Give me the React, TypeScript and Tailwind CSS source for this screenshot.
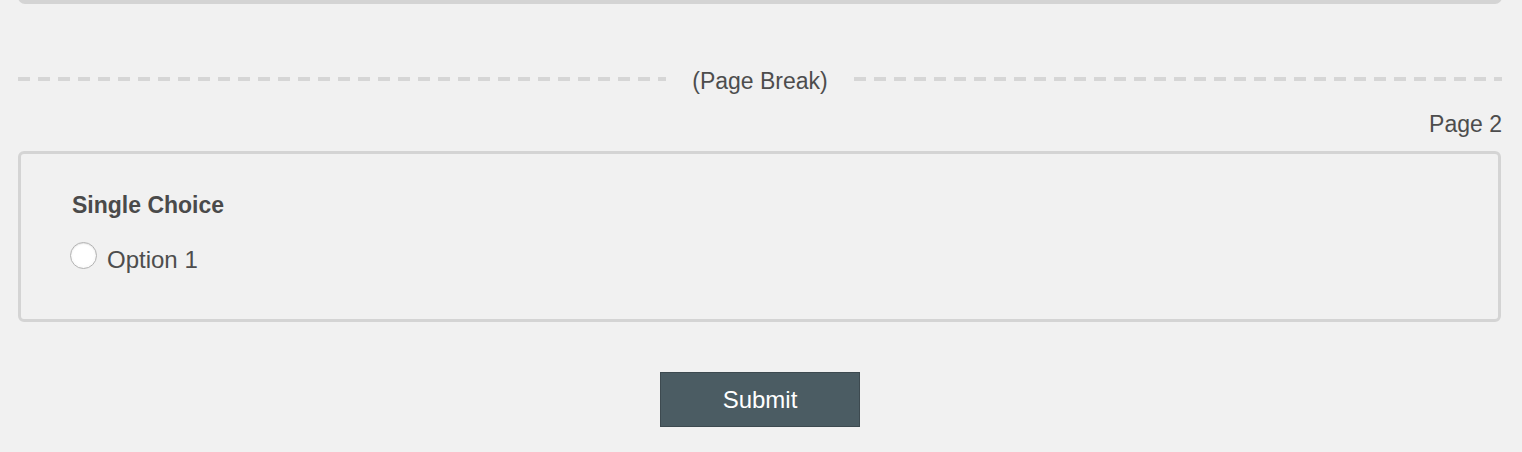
import React from 'react';

const font = { fontFamily: '"Liberation Sans", Arial, Helvetica, sans-serif' };

const DashLine: React.FC = () => (
  <div className="flex-1 h-[4px] bg-[repeating-linear-gradient(to_right,#d6d6d6_0_12px,transparent_12px_20px)]" />
);

const App: React.FC = () => {
  return (
    <div className="min-h-[452px] bg-[#f1f1f1] text-[#4d4d4d] pb-6 overflow-hidden" style={font}>
      {/* end of previous page's card */}
      <div className="ml-[18px] mr-[20px] -mt-[9px] h-[13px] border-x-[3px] border-b-[4px] border-[#d4d4d4] rounded-b-[7px]" />

      {/* page break */}
      <div className="ml-[18px] mr-[20px] mt-[59px] flex items-center">
        <DashLine />
        <span className="px-[26px] pt-[4px] text-[23px] leading-[28px]">(Page Break)</span>
        <DashLine />
      </div>

      <div className="ml-[18px] mr-[20px] mt-[15px] text-right text-[23px] leading-[28px]">Page 2</div>

      {/* question card */}
      <div className="ml-[18px] mr-[21px] mt-[13px] border-[3px] border-[#d4d4d4] rounded-[6px] pl-[51px] pt-[37px] pb-[45px]">
        <div className="font-bold text-[23px] leading-[28px] text-[#4a4a4a]">Single Choice</div>
        <label className="mt-[23px] flex items-start">
          <span className="-ml-[2px] w-[27px] h-[27px] rounded-full border border-[#b3b3b3] bg-[radial-gradient(circle,#ffffff_55%,#ededed_100%)] shadow-[inset_0_1px_1px_rgba(0,0,0,0.08)]" />
          <span className="ml-[10px] mt-[4px] text-[24px] leading-[28px]">Option 1</span>
        </label>
      </div>

      <div className="mt-[50px] flex justify-center">
        <button className="-ml-[2px] w-[200px] h-[55px] bg-[#4b5c63] border border-[#3d4a50] text-white text-[24px] leading-none">
          Submit
        </button>
      </div>
    </div>
  );
};

export default App;
